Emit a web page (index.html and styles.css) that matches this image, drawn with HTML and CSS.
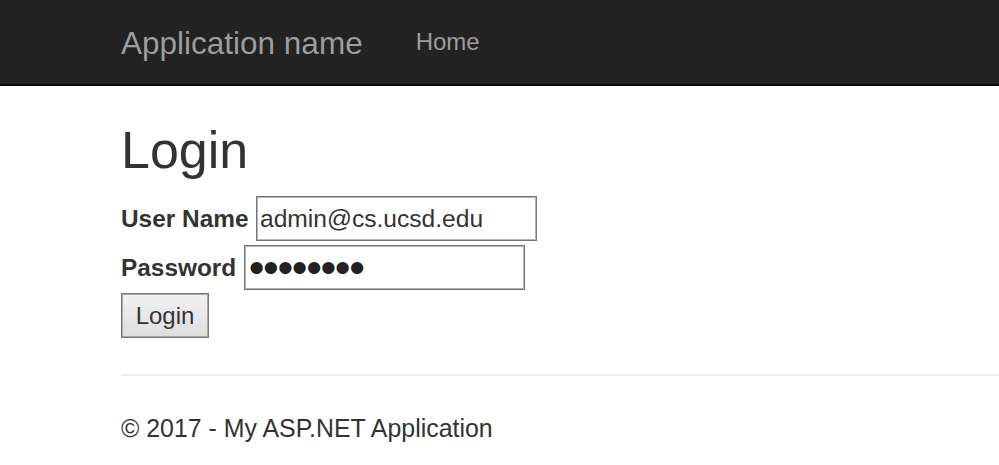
FILE: index.html
```html
<!DOCTYPE html>
<html>
<head>
<meta charset="utf-8">
<title>Login - My ASP.NET Application</title>
<link rel="stylesheet" href="styles.css">
</head>
<body>
<header class="navbar">
  <div class="container nav-inner">
    <a class="brand" href="#">Application name</a>
    <nav class="nav-links"><a href="#">Home</a></nav>
  </div>
</header>
<main class="container body-content">
  <h2 class="title">Login</h2>
  <form class="login-form">
    <div class="row">
      <label class="lbl" for="user">User Name</label>
      <input class="field" id="user" type="text" value="admin@cs.ucsd.edu">
    </div>
    <div class="row">
      <label class="lbl" for="pass">Password</label>
      <input class="field pw" id="pass" type="password" value="secret12">
    </div>
    <div class="row btn-row">
      <button class="btn" type="button">Login</button>
    </div>
  </form>
  <hr class="rule">
  <footer class="footer">
    <p>&copy; 2017 - My ASP.NET Application</p>
  </footer>
</main>
</body>
</html>
```
FILE: styles.css
```css
* { box-sizing: border-box; }
html, body { margin: 0; padding: 0; }
body {
  font-family: "Liberation Sans", Arial, Helvetica, sans-serif;
  font-size: 24px;
  line-height: 34px;
  color: #333;
  background: #fff;
  overflow: hidden;
}
.container { padding-left: 121px; }
.navbar {
  height: 86px;
  background: #222;
  border-bottom: 2px solid #080808;
}
.nav-inner { display: flex; align-items: flex-start; }
.brand {
  font-size: 31.5px;
  line-height: 34px;
  padding: 26px 26px 24px 0;
  color: #9d9d9d;
  text-decoration: none;
}
.nav-links a {
  display: block;
  font-size: 24px;
  line-height: 34px;
  padding: 25px 26px 25px 27px;
  color: #9d9d9d;
  text-decoration: none;
}
.title {
  font-size: 52px;
  font-weight: 500;
  line-height: 56px;
  margin: 36px 0 0;
}
.login-form {
  display: flex;
  flex-direction: column;
  gap: 4px;
  margin-top: 18px;
}
.row {
  display: flex;
  align-items: center;
  gap: 7.5px;
  height: 45px;
}
.btn-row { margin-top: -1px; }
.lbl { font-weight: bold; font-size: 24.4px; }
.field {
  width: 281px;
  height: 45px;
  font: inherit;
  font-size: 24.6px;
  color: #333;
  padding: 1px 3px;
  border: 1px solid #767676;
  box-shadow: inset 0 0 0 1px #b4b4b4;
  background: #fff;
  outline: none;
}
.pw {
  font-size: 45px;
  line-height: 41px;
  letter-spacing: -1.4px;
  padding: 0 4px 0 4px;
  color: #222;
}
.btn {
  width: 88px;
  height: 45px;
  font: inherit;
  color: #333;
  padding: 0;
  border: 1px solid #767676;
  box-shadow: inset 0 0 0 1px #a8a8a8;
  background: linear-gradient(#f2f2f2, #dedede);
}
.rule {
  border: 0;
  border-top: 2px solid #eee;
  margin: 36px 0 0;
}
.footer p { margin: 35px 0 0; font-size: 24.9px; }
```
